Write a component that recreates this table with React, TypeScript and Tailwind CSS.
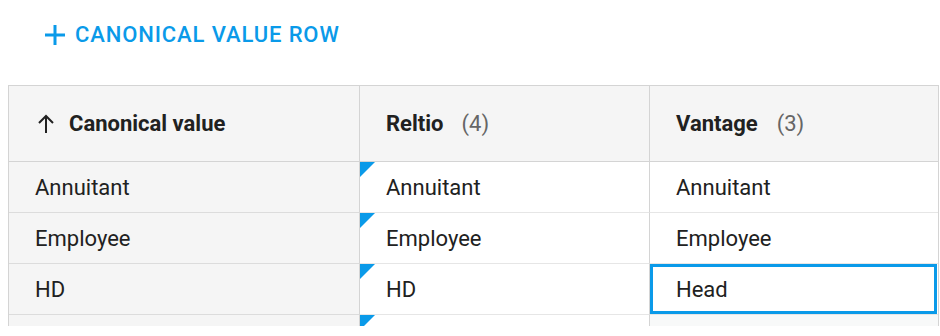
import React from "react";

const rows = [
  ["Annuitant", "Annuitant", "Annuitant"],
  ["Employee", "Employee", "Employee"],
  ["HD", "HD", "Head"],
  ["", "", ""],
];

function Triangle() {
  return (
    <div className="absolute left-0 top-0 w-0 h-0 border-t-[15px] border-r-[15px] border-t-[#0a9ae9] border-r-transparent" />
  );
}

export default function App() {
  return (
    <div
      className="w-[940px] h-[336px] bg-white overflow-hidden text-[#212121]"
      style={{ fontFamily: "Roboto, 'Liberation Sans', sans-serif" }}
    >
      <div className="h-[85px] pl-[43px] pt-[18px]">
        <button className="flex items-center gap-[8px] text-[#0a9ae9] font-medium text-[22px] tracking-[0.04em]">
          <svg width="24" height="24" viewBox="0 0 24 24" className="shrink-0">
            <path d="M12 2v20M2 12h20" stroke="#0a9ae9" strokeWidth="3" fill="none" />
          </svg>
          <span>CANONICAL VALUE ROW</span>
        </button>
      </div>
      <div className="ml-[8px] w-[931px] h-[241px] overflow-hidden border-l border-t border-r border-[#d4d4d4]">
        <div className="grid grid-cols-[351px_290px_289px]">
          <div className="h-[76px] bg-[#f5f5f5] border-r border-b border-[#d4d4d4] flex items-center pl-[28px] gap-[14px] font-bold text-[22px]">
            <svg width="18" height="20" viewBox="0 0 18 20" className="shrink-0">
              <path d="M9 19V2M2 9l7-7 7 7" stroke="#212121" strokeWidth="2" fill="none" />
            </svg>
            <span>Canonical value</span>
          </div>
          <div className="h-[76px] bg-[#f5f5f5] border-r border-b border-[#d4d4d4] flex items-center pl-[26px] text-[22px]">
            <span className="font-bold">Reltio</span>
            <span className="ml-[18px] text-[#666]">(4)</span>
          </div>
          <div className="h-[76px] bg-[#f5f5f5] border-b border-[#d4d4d4] flex items-center pl-[26px] text-[22px]">
            <span className="font-bold">Vantage</span>
            <span className="ml-[19px] text-[#666]">(3)</span>
          </div>
          {rows.map((r, i) => (
            <React.Fragment key={i}>
              <div className="h-[51px] bg-[#f5f5f5] border-r border-b border-r-[#d4d4d4] border-b-[#dcdcdc] flex items-center pl-[26px] text-[22px]">
                {r[0]}
              </div>
              <div className="relative h-[51px] bg-white border-r border-b border-r-[#d4d4d4] border-b-[#e6e6e6] flex items-center pl-[26px] text-[22px]">
                <Triangle />
                {r[1]}
              </div>
              <div
                className={
                  "relative h-[51px] border-b border-b-[#e6e6e6] flex items-center pl-[26px] text-[22px] " +
                  (i === 3 ? "bg-[#f8f9f9]" : "bg-white")
                }
              >
                {i === 2 && (
                  <div className="absolute left-0 top-0 right-[2px] bottom-0 border-[3px] border-[#0a9ae9]" />
                )}
                <span className="relative">{r[2]}</span>
              </div>
            </React.Fragment>
          ))}
        </div>
      </div>
    </div>
  );
}
